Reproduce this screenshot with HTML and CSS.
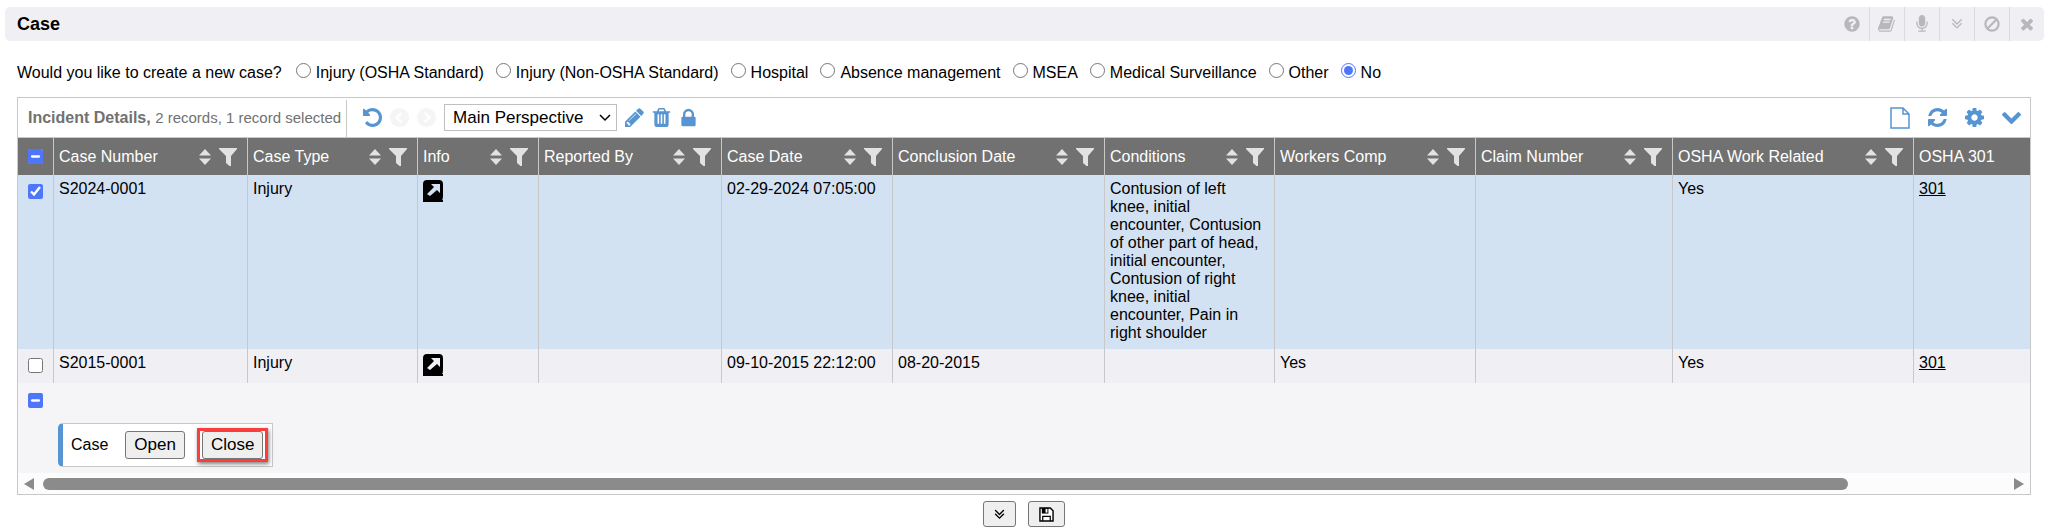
FILE: index.html
```html
<!DOCTYPE html>
<html lang="en">
<head>
<meta charset="UTF-8">
<meta name="viewport" content="width=device-width, initial-scale=1.0">
<title>Case</title>
<link rel="stylesheet" href="styles.css">
</head>
<body>

<svg class="sprite" aria-hidden="true">
    <symbol id="i-help" viewBox="0 0 1792 1792"><path d="M1024 1376v-192q0-14-9-23t-23-9h-192q-14 0-23 9t-9 23v192q0 14 9 23t23 9h192q14 0 23-9t9-23zm256-672q0-88-55.500-163t-138.500-116-170-41q-243 0-371 213-15 24 8 42l132 100q7 6 19 6 16 0 25-12 53-68 86-92 34-24 86-24 48 0 85.500 26t37.500 59q0 38-20 61t-68 45q-63 28-115.500 86.500t-52.500 125.500v36q0 14 9 23t23 9h192q14 0 23-9t9-23q0-19 21.500-49.500t54.500-49.500q32-18 49-28.500t46-35 44.500-48 28-60.500 12.500-81zm384 192q0 209-103 385.500t-279.500 279.500-385.500 103-385.500-103-279.500-279.500-103-385.500 103-385.500 279.500-279.500 385.500-103 385.500 103 279.500 279.500 103 385.500z"/></symbol>
    <symbol id="i-book" viewBox="0 0 1792 1792"><path d="M1639 478q40 57 18 129l-275 906q-19 64-76.500 107.500t-122.500 43.500h-923q-77 0-148.500-53.500t-99.500-131.500q-24-67-2-127 0-4 3-27t4-37q1-8-3-21.500t-3-19.500q2-11 8-21t16.500-23.500 16.500-23.500q23-38 45-91.500t30-91.500q3-10 .5-30t-.5-28q3-11 17-28t17-23q21-36 42-92t25-90q1-9-2.500-32t.5-28q4-13 22-30.500t22-22.500q19-26 42.500-84.500t27.500-96.500q1-8-3-25.500t-2-26.500q2-8 9-18t18-23 17-21q8-12 16.500-30.500t15-35 16-36 19.500-32 26.500-23.500 36-11.500 47.500 5.500l-1 3q38-9 51-9h761q74 0 114 56t18 130l-274 906q-36 119-71.500 153.500t-128.500 34.500h-869q-27 0-38 15-11 16-1 43 24 70 144 70h923q29 0 56-15.500t35-41.500l300-987q7-22 5-57 38 15 59 43zm-1064 2q-4 13 2 22.500t20 9.500h608q13 0 25.500-9.500t16.500-22.500l21-64q4-13-2-22.500t-20-9.500h-608q-13 0-25.500 9.500t-16.500 22.500zm-83 256q-4 13 2 22.500t20 9.500h608q13 0 25.500-9.500t16.500-22.500l21-64q4-13-2-22.500t-20-9.500h-608q-13 0-25.500 9.500t-16.500 22.500z"/></symbol>
    <symbol id="i-mic" viewBox="0 0 1792 1792"><path d="M1472 704v128q0 221-147.500 384.500t-364.500 187.500v132h256q26 0 45 19t19 45-19 45-45 19h-640q-26 0-45-19t-19-45 19-45 45-19h256v-132q-217-24-364.500-187.500t-147.500-384.500v-128q0-26 19-45t45-19 45 19 19 45v128q0 185 131.500 316.500t316.500 131.500 316.500-131.500 131.500-316.500v-128q0-26 19-45t45-19 45 19 19 45zm-256-384v512q0 132-94 226t-226 94-226-94-94-226v-512q0-132 94-226t226-94 226 94 94 226z"/></symbol>
    <symbol id="i-down2" viewBox="0 0 1792 1792"><path d="M1395 864q0 13-10 23l-466 466q-10 10-23 10t-23-10l-466-466q-10-10-10-23t10-23l50-50q10-10 23-10t23 10l393 393 393-393q10-10 23-10t23 10l50 50q10 10 10 23zm0-384q0 13-10 23l-466 466q-10 10-23 10t-23-10l-466-466q-10-10-10-23t10-23l50-50q10-10 23-10t23 10l393 393 393-393q10-10 23-10t23 10l50 50q10 10 10 23z"/></symbol>
    <symbol id="i-ban" viewBox="0 0 18 18"><path d="M4 14L14 4" fill="none" stroke="currentColor" stroke-width="2.200"/><circle cx="9" cy="9" r="6.600" fill="none" stroke="currentColor" stroke-width="2.200"/></symbol>
    <symbol id="i-times" viewBox="0 0 1792 1792"><path d="M1490 1322q0 40-28 68l-136 136q-28 28-68 28t-68-28l-294-294-294 294q-28 28-68 28t-68-28l-136-136q-28-28-28-68t28-68l294-294-294-294q-28-28-28-68t28-68l136-136q28-28 68-28t68 28l294 294 294-294q28-28 68-28t68 28l136 136q28 28 28 68t-28 68l-294 294 294 294q28 28 28 68z"/></symbol>
    <symbol id="i-undo" viewBox="128 128 1536 1536"><path d="M1664 896q0 156-61 298t-164 245-245 164-298 61q-172 0-327-72.500t-264-204.500q-7-10-6.500-22.500t8.500-20.500l137-138q10-9 25-9 16 2 23 12 73 95 179 147t225 52q104 0 198.500-40.500t163.500-109.500 109.500-163.500 40.500-198.500-40.500-198.500-109.500-163.500-163.500-109.500-198.500-40.500q-98 0-188 35.500t-160 101.500l137 138q31 30 14 69-17 40-59 40h-448q-26 0-45-19t-19-45v-448q0-42 40-59 39-17 69 14l130 129q107-101 244.500-156.500t284.500-55.500q156 0 298 61t245 164 164 245 61 298z"/></symbol>
    <symbol id="i-prev" viewBox="0 0 20 20"><circle cx="10" cy="10" r="10"/><path d="M12 5L7 10l5 5" fill="none" stroke="#fff" stroke-width="2.600"/></symbol>
    <symbol id="i-next" viewBox="0 0 20 20"><circle cx="10" cy="10" r="10"/><path d="M8 5l5 5-5 5" fill="none" stroke="#fff" stroke-width="2.600"/></symbol>
    <symbol id="i-pencil" viewBox="128 128 1536 1536"><path d="M491 1536l91-91-235-235-91 91v107h128v128h107zm523-928q0-22-22-22-10 0-17 7l-542 542q-7 7-7 17 0 22 22 22 10 0 17-7l542-542q7-7 7-17zm-54-192l416 416-832 832h-416v-416zm683 96q0 53-37 90l-166 166-416-416 166-165q36-38 90-38 53 0 91 38l235 234q37 39 37 91z"/></symbol>
    <symbol id="i-trash" viewBox="128 128 1536 1536"><path d="M704 1376v-704q0-14-9-23t-23-9h-64q-14 0-23 9t-9 23v704q0 14 9 23t23 9h64q14 0 23-9t9-23zm256 0v-704q0-14-9-23t-23-9h-64q-14 0-23 9t-9 23v704q0 14 9 23t23 9h64q14 0 23-9t9-23zm256 0v-704q0-14-9-23t-23-9h-64q-14 0-23 9t-9 23v704q0 14 9 23t23 9h64q14 0 23-9t9-23zm-544-992h448l-48-117q-7-9-17-11h-317q-10 2-17 11zm928 32v64q0 14-9 23t-23 9h-96v948q0 83-47 143.500t-113 60.500h-832q-66 0-113-58.500t-47-141.500v-952h-96q-14 0-23-9t-9-23v-64q0-14 9-23t23-9h309l70-167q15-37 54-63t79-26h320q40 0 79 26t54 63l70 167h309q14 0 23 9t9 23z"/></symbol>
    <symbol id="i-lock" viewBox="128 128 1536 1408"><path d="M640 768h512v-192q0-106-75-181t-181-75-181 75-75 181v192zm832 96v576q0 40-28 68t-68 28h-960q-40 0-68-28t-28-68v-576q0-40 28-68t68-28h32v-192q0-184 132-316t316-132 316 132 132 316v192h32q40 0 68 28t28 68z"/></symbol>
    <symbol id="i-caret" viewBox="0 0 12 8"><path d="M1 1l5 5 5-5" fill="none" stroke="#000" stroke-width="1.500"/></symbol>
    <symbol id="i-file" viewBox="0 0 20 22"><path d="M1 1h12l6 6v14H1zM13 1v6h6" fill="none" stroke="currentColor" stroke-width="1.500"/></symbol>
    <symbol id="i-refresh" viewBox="128 128 1536 1536"><path d="M1639 1056q0 5-1 7-64 268-268 434.500t-478 166.500q-146 0-282.500-55t-243.500-157l-129 129q-19 19-45 19t-45-19-19-45v-448q0-26 19-45t45-19h448q26 0 45 19t19 45-19 45l-137 137q71 66 161 102t187 36q134 0 250-65t186-179q11-17 53-117 8-23 30-23h192q13 0 22.500 9.500t9.500 22.500zm25-800v448q0 26-19 45t-45 19h-448q-26 0-45-19t-19-45 19-45l138-138q-148-137-349-137-134 0-250 65t-186 179q-11 17-53 117-8 23-30 23h-199q-13 0-22.500-9.500t-9.500-22.500v-7q65-268 270-434.500t480-166.500q146 0 284 55.500t245 156.500l130-129q19-19 45-19t45 19 19 45z"/></symbol>
    <symbol id="i-cog" viewBox="128 128 1536 1536"><path d="M1152 896q0-106-75-181t-181-75-181 75-75 181 75 181 181 75 181-75 75-181zm512-109v222q0 12-8 23t-20 13l-185 28q-19 54-39 91 35 50 107 138 10 12 10 25t-9 23q-27 37-99 108t-94 71q-12 0-26-9l-138-108q-44 23-91 38-16 136-29 186-7 28-36 28h-222q-14 0-24.500-8.500t-11.500-21.500l-28-184q-49-16-90-37l-141 107q-10 9-25 9-14 0-25-11-126-114-165-168-7-10-7-23 0-12 8-23 15-21 51-66.500t54-70.500q-27-50-41-99l-183-27q-13-2-21-12.500t-8-23.500v-222q0-12 8-23t19-13l186-28q14-46 39-92-40-57-107-138-10-12-10-24 0-10 9-23 26-36 98.500-107.500t94.500-71.500q13 0 26 10l138 107q44-23 91-38 16-136 29-186 7-28 36-28h222q14 0 24.500 8.500t11.500 21.500l28 184q49 16 90 37l142-107q9-9 24-9 13 0 25 10 129 119 165 170 7 8 7 22 0 12-8 23-15 21-51 66.500t-54 70.500q26 50 41 98l183 28q13 2 21 12.500t8 23.500z"/></symbol>
    <symbol id="i-chevron" viewBox="90 200 1612 1612"><path d="M1683 808l-742 741q-19 19-45 19t-45-19l-742-741q-19-19-19-45.500t19-45.500l166-165q19-19 45-19t45 19l531 531 531-531q19-19 45-19t45 19l166 165q19 19 19 45.500t-19 45.500z"/></symbol>
    <symbol id="i-sort" viewBox="0 0 12 16"><path d="M6 0l6 6.500H0zM0 9.500h12L6 16z"/></symbol>
    <symbol id="i-filter" viewBox="0 0 18 18"><path d="M0 0h18v1l-6 7v10h-1.500L7 15V8L0 1z"/></symbol>
    <symbol id="i-open" viewBox="0 0 20 22"><path d="M4 0h12q4 0 4 4v12q0 3-1 4h1v2H0V4q0-4 4-4z" fill="#000"/><path d="M8 4h9v9l-3-3-7 6-3-2 7-7z"/></symbol>
    <symbol id="i-save" viewBox="0 0 16 16"><path d="M1 1h11l3 3v11H1z" fill="#fff" stroke="#000" stroke-width="1.500"/><path d="M3 1h7v6H3z" fill="#000"/><path d="M7 2h2v4H7z" fill="#fff"/><path d="M4 15v-5h8v5" fill="none" stroke="#000" stroke-width="1.300"/></symbol>
</svg>

<header class="titlebar">
    <h1>Case</h1>
    <div class="title-buttons">
        <button type="button" aria-label="Help"><svg><use href="#i-help"/></svg></button>
        <button type="button" aria-label="Reference"><svg><use href="#i-book"/></svg></button>
        <button type="button" aria-label="Dictate"><svg><use href="#i-mic"/></svg></button>
        <button type="button" aria-label="Expand"><svg><use href="#i-down2"/></svg></button>
        <button type="button" aria-label="Disable"><svg><use href="#i-ban"/></svg></button>
        <button type="button" aria-label="Close panel"><svg><use href="#i-times"/></svg></button>
    </div>
</header>

<form class="case-form">
    <div class="question" role="radiogroup" aria-labelledby="question">
        <span id="question" class="prompt">Would you like to create a new case?</span>
        <label><input type="radio" name="newcase">Injury (OSHA Standard)</label>
        <label><input type="radio" name="newcase">Injury (Non-OSHA Standard)</label>
        <label><input type="radio" name="newcase">Hospital</label>
        <label><input type="radio" name="newcase">Absence management</label>
        <label><input type="radio" name="newcase">MSEA</label>
        <label><input type="radio" name="newcase">Medical Surveillance</label>
        <label><input type="radio" name="newcase">Other</label>
        <label><input type="radio" name="newcase" checked>No</label>
    </div>

    <section class="panel">
        <div class="toolbar">
            <div class="caption"><b>Incident Details,</b> <span>2 records, 1 record selected</span></div>
            <div class="tools">
                <button type="button" aria-label="Undo"><svg><use href="#i-undo"/></svg></button>
                <button type="button" class="off" aria-label="Previous" disabled><svg><use href="#i-prev"/></svg></button>
                <button type="button" class="off" aria-label="Next" disabled><svg><use href="#i-next"/></svg></button>
                <div class="picker">
                    <select aria-label="Perspective">
                        <option>Main Perspective</option>
                    </select>
                    <svg class="caret"><use href="#i-caret"/></svg>
                </div>
                <button type="button" aria-label="Edit"><svg><use href="#i-pencil"/></svg></button>
                <button type="button" aria-label="Delete"><svg><use href="#i-trash"/></svg></button>
                <button type="button" aria-label="Lock"><svg><use href="#i-lock"/></svg></button>
            </div>
            <div class="tools right">
                <button type="button" aria-label="New"><svg class="file"><use href="#i-file"/></svg></button>
                <button type="button" aria-label="Refresh"><svg><use href="#i-refresh"/></svg></button>
                <button type="button" aria-label="Settings"><svg><use href="#i-cog"/></svg></button>
                <button type="button" aria-label="Collapse"><svg><use href="#i-chevron"/></svg></button>
            </div>
        </div>

        <div class="grid-wrap">
            <table class="grid">
                <colgroup>
                    <col class="c-check"><col class="c-number"><col class="c-type"><col class="c-info"><col class="c-reported"><col class="c-date"><col class="c-conclusion"><col class="c-conditions"><col class="c-comp"><col class="c-claim"><col class="c-osha"><col>
                </colgroup>
                <thead>
                    <tr>
                        <th class="check"><input type="checkbox" class="some" aria-label="Select all"></th>
                        <th><div class="head">Case Number<svg class="sort"><use href="#i-sort"/></svg><svg class="filter"><use href="#i-filter"/></svg></div></th>
                        <th><div class="head">Case Type<svg class="sort"><use href="#i-sort"/></svg><svg class="filter"><use href="#i-filter"/></svg></div></th>
                        <th><div class="head">Info<svg class="sort"><use href="#i-sort"/></svg><svg class="filter"><use href="#i-filter"/></svg></div></th>
                        <th><div class="head">Reported By<svg class="sort"><use href="#i-sort"/></svg><svg class="filter"><use href="#i-filter"/></svg></div></th>
                        <th><div class="head">Case Date<svg class="sort"><use href="#i-sort"/></svg><svg class="filter"><use href="#i-filter"/></svg></div></th>
                        <th><div class="head">Conclusion Date<svg class="sort"><use href="#i-sort"/></svg><svg class="filter"><use href="#i-filter"/></svg></div></th>
                        <th><div class="head">Conditions<svg class="sort"><use href="#i-sort"/></svg><svg class="filter"><use href="#i-filter"/></svg></div></th>
                        <th><div class="head">Workers Comp<svg class="sort"><use href="#i-sort"/></svg><svg class="filter"><use href="#i-filter"/></svg></div></th>
                        <th><div class="head">Claim Number<svg class="sort"><use href="#i-sort"/></svg><svg class="filter"><use href="#i-filter"/></svg></div></th>
                        <th><div class="head">OSHA Work Related<svg class="sort"><use href="#i-sort"/></svg><svg class="filter"><use href="#i-filter"/></svg></div></th>
                        <th><div class="head">OSHA 301</div></th>
                    </tr>
                </thead>
                <tbody>
                    <tr class="selected">
                        <td class="check"><input type="checkbox" aria-label="Select S2024-0001" checked></td>
                        <td>S2024-0001</td>
                        <td>Injury</td>
                        <td><a href="#" class="open" aria-label="Open info"><svg><use href="#i-open"/></svg></a></td>
                        <td></td>
                        <td>02-29-2024 07:05:00</td>
                        <td></td>
                        <td>Contusion of left knee, initial encounter, Contusion of other part of head, initial encounter, Contusion of right knee, initial encounter, Pain in right shoulder</td>
                        <td></td>
                        <td></td>
                        <td>Yes</td>
                        <td><a href="#">301</a></td>
                    </tr>
                    <tr>
                        <td class="check"><input type="checkbox" aria-label="Select S2015-0001"></td>
                        <td>S2015-0001</td>
                        <td>Injury</td>
                        <td><a href="#" class="open" aria-label="Open info"><svg><use href="#i-open"/></svg></a></td>
                        <td></td>
                        <td>09-10-2015 22:12:00</td>
                        <td>08-20-2015</td>
                        <td></td>
                        <td>Yes</td>
                        <td></td>
                        <td>Yes</td>
                        <td><a href="#">301</a></td>
                    </tr>
                </tbody>
            </table>
        </div>

        <div class="below">
            <input type="checkbox" class="some" aria-label="Select all records">
            <div class="actions">
                <span>Case</span>
                <button type="button" class="btn">Open</button>
                <span class="marked"><button type="button" class="btn">Close</button></span>
            </div>
        </div>

        <div class="scrollbar">
            <span class="arrow left"></span>
            <div class="track"><div class="thumb"></div></div>
            <span class="arrow"></span>
        </div>
    </section>

    <div class="bottom">
        <button type="button" class="btn more" aria-label="More"><svg><use href="#i-down2"/></svg></button>
        <button type="button" class="btn save" aria-label="Save"><svg><use href="#i-save"/></svg></button>
    </div>
</form>

<script>
document.querySelectorAll(".some").forEach(function (box) {
    box.indeterminate = true;
});
</script>

</body>
</html>
```
FILE: styles.css
```css
* {
    box-sizing: border-box;
}

body {
    margin: 0;
    padding: 7px 4px 0 5px;
    background: #fff;
    color: #000;
    font-family: "Liberation Sans", Arial, sans-serif;
    font-size: 16px;
    line-height: 18px;
}

svg {
    display: block;
    fill: currentColor;
}

.sprite {
    display: none;
}

input {
    width: 15px;
    height: 15px;
    margin: 0;
    accent-color: #4d76fa;
}

.titlebar {
    display: flex;
    align-items: center;
    justify-content: space-between;
    height: 34px;
    padding-left: 12px;
    background: #f0eff4;
    border-radius: 5px;
}

.titlebar h1 {
    margin: 0;
    font-size: 18px;
}

.title-buttons {
    display: flex;
    height: 100%;
}

.title-buttons button {
    display: flex;
    align-items: center;
    justify-content: center;
    width: 35px;
    padding: 0;
    border: 0;
    border-left: 1px solid #dcdcdf;
    background: none;
    color: #b8b8bb;
}

.title-buttons button:first-child {
    border-left: 0;
}

.title-buttons svg {
    width: 18px;
    height: 18px;
}

.case-form {
    padding: 0 13px 0 12px;
}

.question {
    display: flex;
    align-items: baseline;
    gap: 12px;
    padding: 22px 0 15px;
}

.prompt {
    padding-right: 2px;
}

.question label {
    display: flex;
    align-items: baseline;
    gap: 5px;
}

.panel {
    border: 1px solid #c8c8c8;
}

.toolbar {
    display: flex;
    height: 40px;
    border-bottom: 1px solid #c8c8c8;
}

.caption {
    padding: 9px 5px 0 10px;
    margin-top: 2px;
    border-right: 1px solid #c8c8c8;
    color: #717171;
}

.caption span {
    font-size: 15px;
}

.tools {
    display: flex;
    align-items: center;
    gap: 8px;
    padding-left: 16px;
}

.tools button {
    padding: 0;
    border: 0;
    background: none;
    color: #5694d2;
}

.tools svg {
    width: 19px;
    height: 19px;
}

.tools .off {
    color: #f5f5f5;
}

.picker {
    position: relative;
}

.picker select {
    display: block;
    width: 173px;
    height: 27px;
    padding: 0 8px;
    appearance: none;
    border: 1px solid #c0c0c0;
    border-radius: 0;
    background: #fff;
    color: #000;
    font-family: inherit;
    font-size: 17px;
}

.picker .caret {
    position: absolute;
    top: 10px;
    right: 6px;
    width: 12px;
    height: 8px;
    pointer-events: none;
}

.tools.right {
    gap: 18px;
    margin-left: auto;
    padding-right: 9px;
}

.tools .file {
    width: 20px;
    height: 22px;
}

.grid-wrap {
    overflow: hidden;
}

.grid {
    width: 100%;
    table-layout: fixed;
    border-collapse: separate;
    border-spacing: 0;
}

.c-check { width: 36px; }
.c-number { width: 194px; }
.c-type { width: 170px; }
.c-info { width: 121px; }
.c-reported { width: 183px; }
.c-date { width: 171px; }
.c-conclusion { width: 212px; }
.c-conditions { width: 170px; }
.c-comp { width: 201px; }
.c-claim { width: 197px; }
.c-osha { width: 241px; }

.grid th {
    height: 37px;
    padding: 0 10px 0 5px;
    border-right: 1px solid #c8c8c8;
    background: #717171;
    color: #fff;
    font-weight: normal;
    text-align: left;
}

.head {
    display: flex;
    align-items: center;
    white-space: nowrap;
}

.head svg {
    color: #e2e2e2;
}

.sort {
    width: 12px;
    height: 16px;
    margin-left: auto;
}

.filter {
    width: 18px;
    height: 18px;
    margin-left: 8px;
}

.grid td {
    height: 34px;
    padding: 5px 5px 7px;
    border-right: 1px solid #c8c8c8;
    background: #f0eff4;
    vertical-align: top;
}

.grid .selected td {
    background: #d3e2f2;
}

.grid th:last-child,
.grid td:last-child {
    border-right: 0;
}

.grid .check {
    padding-left: 10px;
    padding-right: 0;
}

.grid td.check {
    padding-top: 9px;
}

.check input {
    display: block;
}

.grid a {
    color: #000;
}

.grid .open {
    display: block;
    color: #f0eff4;
}

.grid .selected .open {
    color: #d3e2f2;
}

.open svg {
    width: 20px;
    height: 22px;
}

.below {
    display: flex;
    flex-direction: column;
    align-items: flex-start;
    gap: 15px;
    padding: 10px 10px 6px;
    background: #f5f5f8;
}

.actions {
    display: flex;
    align-items: center;
    height: 44px;
    margin-left: 30px;
    padding: 0 4px 0 8px;
    border: 1px solid #c8c8c8;
    border-left: 5px solid #5694d2;
    border-radius: 5px 0 0 5px;
    background: #fff;
}

.btn {
    height: 28px;
    padding: 0 8px;
    border: 1px solid #767676;
    border-radius: 3px;
    background: #efefef;
    color: #000;
    font-family: inherit;
    font-size: 17px;
}

.actions .btn {
    margin-left: 17px;
}

.marked {
    margin-left: 12px;
    padding: 0 2px;
    border: 3px solid #f93e3e;
    box-shadow: 1px 2px 4px rgba(0, 0, 0, 0.5);
}

.actions .marked .btn {
    display: block;
    margin: 0;
}

.scrollbar {
    display: flex;
    align-items: center;
    gap: 9px;
    height: 21px;
    padding: 0 6px;
    background: #fcfcfc;
}

.arrow {
    border: 6px solid transparent;
    border-left: 10px solid #8b8b8b;
    border-right: 0;
}

.arrow.left {
    border-left: 0;
    border-right: 10px solid #8b8b8b;
}

.track {
    flex: 1;
}

.thumb {
    width: 92%;
    height: 12px;
    border-radius: 6px;
    background: #8b8b8b;
}

.bottom {
    display: flex;
    justify-content: center;
    gap: 12px;
    padding-top: 6px;
}

.bottom .btn {
    height: 26px;
}

.bottom .more {
    padding: 0 7px;
}

.bottom .save {
    padding: 0 10px;
}

.more svg {
    width: 17px;
    height: 17px;
}

.save svg {
    width: 15px;
    height: 15px;
}
```
